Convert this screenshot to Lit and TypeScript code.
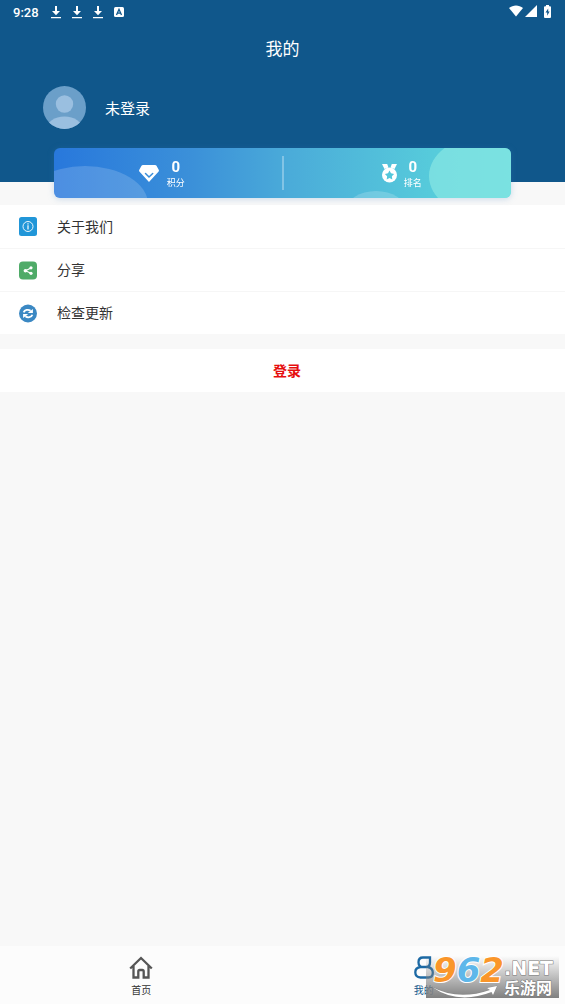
import { LitElement, html, css, svg } from "lit";
import { customElement } from "lit/decorators.js";

const download = html`<svg viewBox="0 0 10 13" width="10" height="13">
  <path fill="#fff" d="M4 0h2v5h3L5 9.200 1 5h3zM0 11h10v1.300H0z"/>
</svg>`;

const icons = {
  about: svg`<rect width="18" height="19" rx="2.500" fill="#2196d8"/>
    <circle cx="9" cy="9.500" r="5" fill="none" stroke="#fff" stroke-width=".9"/>
    <path d="M9 8.300v4.200M9 6.200v1.200" stroke="#fff" stroke-width="1.200"/>`,
  share: svg`<rect y=".5" width="18" height="18" rx="4" fill="#4fab68"/>
    <path d="M12 7 6.500 9.800 12 12.200" fill="none" stroke="#fff" stroke-width="1.200"/>
    <circle cx="12" cy="6.800" r="1.600" fill="#fff"/><circle cx="6.400" cy="9.700" r="1.800" fill="#fff"/><circle cx="12" cy="12.300" r="1.600" fill="#fff"/>`,
  update: svg`<circle cx="9" cy="9.500" r="9" fill="#3b88c3"/>
    <path d="M4.600 8.400C5.600 5.800 9.300 5 11.600 6.800M13.400 10.800c-1 2.600-4.700 3.300-7 1.500" fill="none" stroke="#fff" stroke-width="1.800"/>
    <path d="M13.900 5v4.100H8.800zM4.100 14.100V10h5.100z" fill="#fff"/>`,
};

const rows = [
  { icon: icons.about, label: "关于我们" },
  { icon: icons.share, label: "分享" },
  { icon: icons.update, label: "检查更新" },
];

@customElement("app-root")
export class AppRoot extends LitElement {
  static styles = css`
    :host {
      display: flex;
      flex-direction: column;
      min-height: 100vh;
      position: relative;
      background: #f8f8f8;
      color: #333;
      font-family: Roboto, "Noto Sans CJK SC", sans-serif;
    }
    svg { display: block; flex: none; }
    button {
      font: inherit;
      color: inherit;
      border: 0;
      padding: 0;
      margin: 0;
      cursor: pointer;
    }
    a { color: inherit; text-decoration: none; }
    .header { background: #10578b; color: #fff; padding-bottom: 53px; }
    .status {
      display: flex;
      align-items: center;
      height: 24px;
      padding: 0 14px 0 13px;
      font-size: 13px;
      font-weight: 500;
    }
    .notices { display: flex; align-items: center; gap: 11px; margin-left: 12px; }
    .signals { display: flex; align-items: center; gap: 2px; margin-left: auto; padding-bottom: 2px; }
    .battery { margin-left: 5px; }
    .title {
      margin: 0;
      font-size: 17px;
      font-weight: 400;
      line-height: 50px;
      text-align: center;
    }
    .profile {
      display: flex;
      align-items: center;
      gap: 19px;
      padding: 12px 43px 0;
      font-size: 15px;
    }
    .shadow { filter: drop-shadow(0 1px 3px #3b80c040); }
    .stats {
      position: relative;
      display: flex;
      align-items: center;
      height: 50px;
      margin: -34px 54px 7px;
      border-radius: 6px;
      overflow: hidden;
      color: #fff;
      background: linear-gradient(90deg, #2878dc, #3b90d9 30%, #4bacd9 52%, #57cddb 85%, #5ad5dc);
    }
    .bubble { position: absolute; border-radius: 50%; }
    .one { left: -32px; top: 18px; width: 126px; height: 76px; background: #ffffff2b; }
    .two { left: 64%; top: 43px; width: 60px; height: 40px; background: #ffffff30; }
    .three { right: -34px; top: -13px; width: 116px; height: 82px; background: #8ce8e4a8; }
    .stat {
      position: relative;
      flex: 1;
      display: flex;
      align-items: center;
      justify-content: center;
      gap: 8px;
      padding-right: 12px;
    }
    .rank { gap: 6px; padding: 0 2px 0 10px; }
    .divider { position: relative; width: 2px; height: 34px; background: #ffffff50; }
    .figure { display: grid; justify-items: center; padding-top: 2px; }
    .value { font-size: 15px; font-weight: 700; line-height: 18px; }
    .caption { font-size: 9px; line-height: 14px; }
    .row {
      display: flex;
      align-items: center;
      gap: 20px;
      width: 100%;
      height: 43px;
      padding: 0 19px;
      background: #fff;
      font-size: 14px;
      line-height: 18px;
    }
    .row + .row { border-top: 1px solid #f6f6f6; }
    .login {
      margin-top: 15px;
      padding: 0 0 2px 9px;
      height: 43px;
      background: #fff;
      color: #e60d0d;
      font-size: 14px;
      font-weight: 700;
    }
    .tabs { display: flex; height: 58px; margin-top: auto; background: #fcfcfc; }
    .tab {
      flex: 1;
      display: flex;
      flex-direction: column;
      align-items: center;
      padding-top: 10px;
      gap: 4px;
      font-size: 10px;
      line-height: 16px;
    }
    .active { color: #10578b; }
    .watermark {
      position: absolute;
      right: 6px;
      bottom: 6px;
      width: 133px;
      height: 42px;
      display: flex;
      background: linear-gradient(#80808000, #808080);
      font-family: "DejaVu Sans", "Noto Sans CJK SC", sans-serif;
      font-weight: 700;
      color: #fff;
      paint-order: stroke fill;
    }
    .digits {
      padding-left: 7px;
      font-size: 34px;
      font-style: italic;
      line-height: 29px;
      color: #fa962a;
      -webkit-text-stroke: 2px #fff;
    }
    .blue { color: #5eb7ea; }
    .site {
      display: flex;
      flex-direction: column;
      font-size: 19px;
      line-height: 24px;
      -webkit-text-stroke: 1px #777;
    }
    .cn { font-size: 16px; line-height: 18px; }
    .swoosh { position: absolute; left: 6px; top: 29px; }
  `;

  render() {
    return html`
      <header class="header">
        <div class="status">
          <span>9:28</span>
          <div class="notices">
            ${download}${download}${download}
            <svg viewBox="0 0 10 10" width="10" height="10"><rect width="10" height="10" rx="1.500" fill="#fff"/><path d="M2.500 8 5 2.300 7.500 8M3.400 6.200h3.200" fill="none" stroke="#10578b" stroke-width="1.300"/></svg>
          </div>
          <div class="signals">
            <svg viewBox="0 0 14 12" width="14" height="12"><path fill="#fff" d="M0 3C4-.4 10-.4 14 3L7 11.500z"/></svg>
            <svg viewBox="0 0 12 12" width="12" height="12"><path fill="#fff" d="M12 0v12H0z"/></svg>
            <svg class="battery" viewBox="0 0 7 13" width="7" height="13"><path fill="#fff" d="M2 0h3v1.300h1q1 0 1 1V12q0 1-1 1H1q-1 0-1-1V2.300q0-1 1-1h1z"/><path fill="#10578b" d="M4.200 3.500 1.500 7.600h1.700v3.200l2.400-4.300H4.200z"/></svg>
          </div>
        </div>
        <h1 class="title">我的</h1>
        <div class="profile">
          <svg viewBox="0 0 43 43" width="43" height="43">
            <defs><clipPath id="disc"><circle cx="21.500" cy="21.500" r="21.500"/></clipPath></defs>
            <g clip-path="url(#disc)"><path fill="#6b9fc9" d="M0 0h43v43H0z"/><circle cx="21.500" cy="18" r="8.700" fill="#9abfe0"/><ellipse cx="21.500" cy="43" rx="18" ry="12.500" fill="#9abfe0"/></g>
          </svg>
          <span>未登录</span>
        </div>
      </header>
      <div class="shadow">
        <section class="stats">
          <i class="bubble one"></i><i class="bubble two"></i><i class="bubble three"></i>
          <div class="stat">
            <svg viewBox="0 0 20 17" width="20" height="17"><path fill="#fff" d="M4 0h12q1 0 1.500.8l2.200 4q.6 1.200-.3 2L10 17 .6 6.800q-.9-.8-.3-2l2.200-4Q3 0 4 0z"/><path d="M6.500 8.500 10 12l3.700-3.500" fill="none" stroke="#398dd9" stroke-width="1.500" stroke-linecap="round"/></svg>
            <div class="figure"><span class="value">0</span><span class="caption">积分</span></div>
          </div>
          <i class="divider"></i>
          <div class="stat rank">
            <svg viewBox="0 0 17 20" width="17" height="20"><path fill="#fff" d="M1 1h5.200l1.300 3.500L3.500 6zM16 1h-5.200L9.500 4.500l4 1.500z"/><circle cx="8.500" cy="12" r="7.500" fill="#fff"/><path fill="#55c7db" d="m8.500 7.500 1.500 2.800 3.100.6-2.200 2.300.4 3.200-2.800-1.400-2.800 1.400.4-3.200-2.200-2.300 3.100-.6z"/></svg>
            <div class="figure"><span class="value">0</span><span class="caption">排名</span></div>
          </div>
        </section>
      </div>
      <div class="list">
        ${rows.map((row) => html`<button class="row"><svg viewBox="0 0 18 19" width="18" height="19">${row.icon}</svg><span>${row.label}</span></button>`)}
      </div>
      <button class="login">登录</button>
      <nav class="tabs">
        <a class="tab" href="#home">
          <svg viewBox="0 0 24 23" width="24" height="23"><path d="M1.200 12.500 12 2l10.800 10.500M4.500 10v11.500h4.800v-6q0-1.500 1.500-1.500h2.400q1.500 0 1.500 1.500v6h4.800V10" fill="none" stroke="#555" stroke-width="2.300"/></svg>
          <span>首页</span>
        </a>
        <a class="tab active" href="#mine">
          <svg viewBox="0 0 20 23" width="20" height="23"><path d="M16 1.500H9Q4.500 1.500 4.500 6.200T9 11h3.500Q16 10.500 16 6.500zM9 11H6.500Q1.300 11.500 1.300 16.300T6.500 21.500h8q4.300 0 4.300-4.700 0-5-5.300-5.800" fill="none" stroke="#1c69a4" stroke-width="2.300"/></svg>
          <span>我的</span>
        </a>
      </nav>
      <div class="watermark">
        <svg class="swoosh" viewBox="0 0 66 14" width="66" height="14"><path fill="#fff" stroke="#888" stroke-width=".6" d="M0 2Q26 16 58 5l-3-2 10-2-4 9-1.500-3Q26 20 0 2z"/></svg>
        <span class="digits">9<span class="blue">6</span>2</span>
        <span class="site"><span>.NET</span><span class="cn">乐游网</span></span>
      </div>
    `;
  }
}
